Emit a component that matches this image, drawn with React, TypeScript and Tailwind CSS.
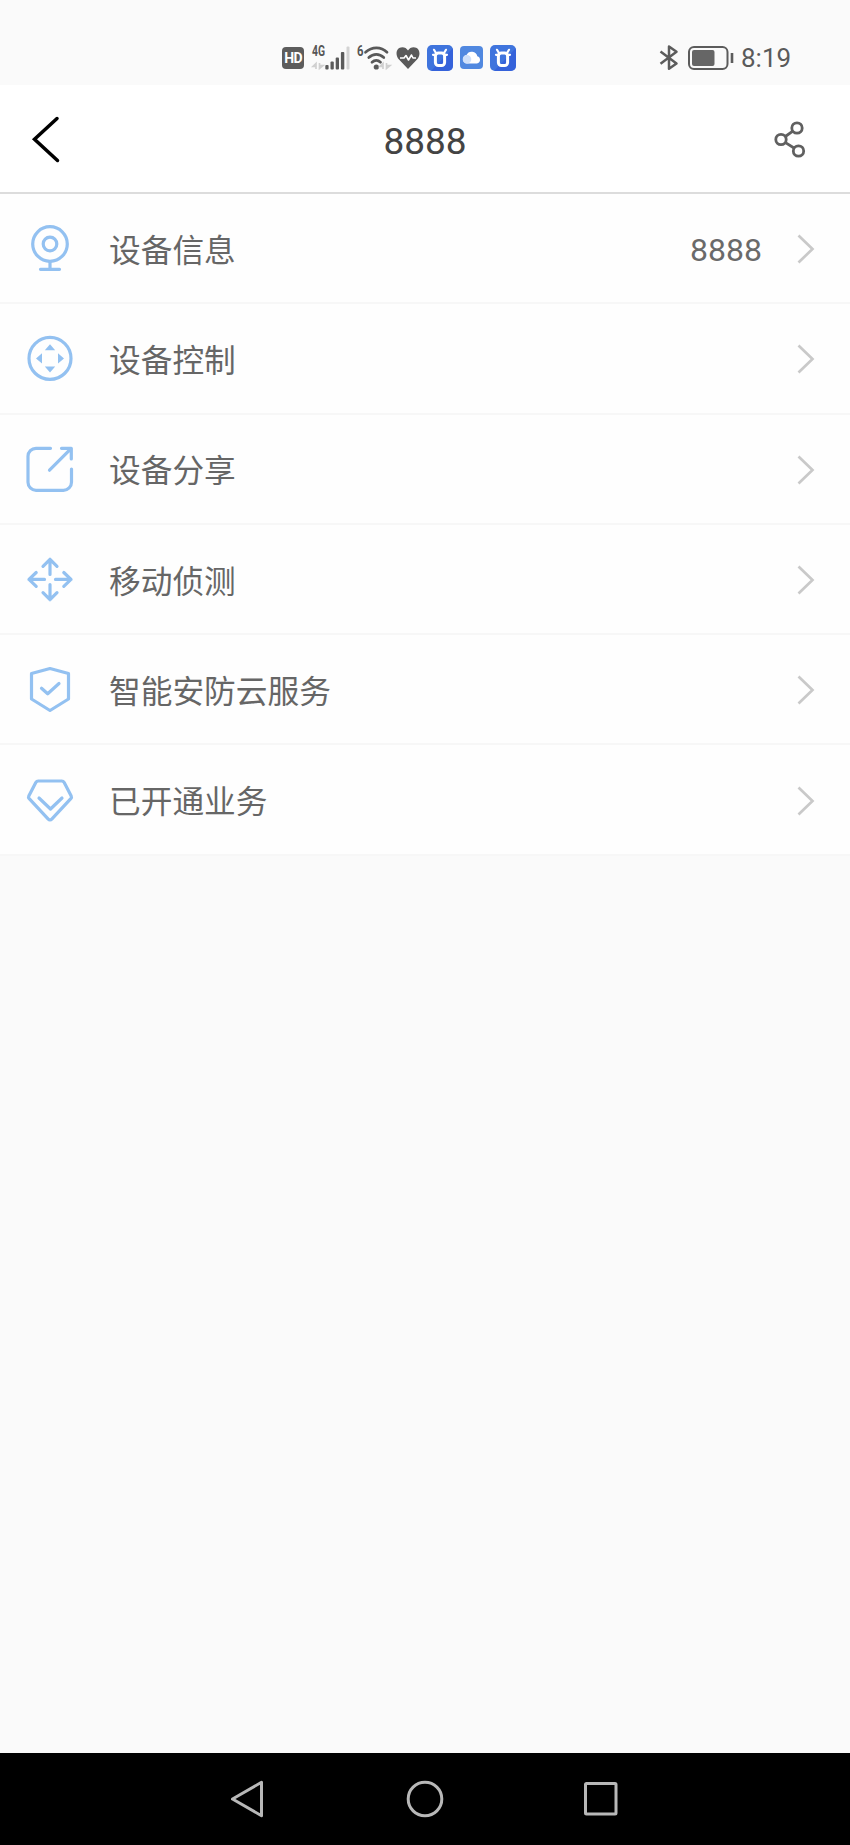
import type { ReactNode } from 'react';

type MenuItem = {
  label: string;
  value?: string;
  icon: ReactNode;
};

const menuItems: MenuItem[] = [
  {
    label: '设备信息',
    value: '8888',
    icon: (
      <>
        <circle cx="25" cy="20" r="17.3" />
        <circle cx="25" cy="20" r="6.8" />
        <path d="M25 37.5v7.5M15.5 45.3h19" />
      </>
    ),
  },
  {
    label: '设备控制',
    icon: (
      <>
        <circle cx="25" cy="24.4" r="21" />
        <path
          d="M25 10.3l5.2 6H19.8zM25 38.5l5.2-6H19.8zM11 24.4l6-5.2v10.4zM39 24.4l-6-5.2v10.4z"
          fill="currentColor"
          stroke="none"
        />
      </>
    ),
  },
  {
    label: '设备分享',
    icon: (
      <>
        <path d="M25.5 3.3H11a8 8 0 0 0-8 8v26a8 8 0 0 0 8 8h27.5a8 8 0 0 0 8-8V24" />
        <path d="M36.5 3.3h9.8V14M46 3.6L24.5 25.2" />
      </>
    ),
  },
  {
    label: '移动侦测',
    icon: (
      <>
        <path d="M25 19.5V4.5M18 11.3l7-7 7 7" />
        <path d="M25 29.5v15M18 37.7l7 7 7-7" />
        <path d="M19.5 24.4H4M11.2 17.5L4 24.4l7.2 6.9" />
        <path d="M30.5 24.4H46M38.8 17.5l7.2 6.9-7.2 6.9" />
      </>
    ),
  },
  {
    label: '智能安防云服务',
    icon: (
      <>
        <path d="M25 3.5l18.5 5V34L25 45.5 6.5 34V8.5z" />
        <path d="M16.5 23.3l6.2 5.5L34 18.5" />
      </>
    ),
  },
  {
    label: '已开通业务',
    icon: (
      <>
        <path d="M13.3 5h23.4c1.3 0 2 .6 2.5 1.5l7 13.5c.5 1 .3 1.8-.4 2.6L27 42.8c-1.3 1.4-2.7 1.4-4 0L4.2 22.6c-.7-.8-.9-1.6-.4-2.6l7-13.5C11.3 5.6 12 5 13.3 5z" />
        <path d="M14 22l11.5 11L37 22" />
      </>
    ),
  },
];

function DataArrows({ x }: { x: number }) {
  return (
    <path
      transform={`translate(${x} 17)`}
      d="M3.5 7V1.5L.5 4.5h3M7 1v5.5l3.5-3H7"
      fill="none"
      stroke="#d0d0d0"
      strokeWidth="1.7"
    />
  );
}

function SignalIcon() {
  return (
    <svg className="ml-2 h-[26px] w-[38px] overflow-visible" viewBox="0 0 38 26">
      <text x="0" y="10.8" fontSize="14" fontWeight="700" fill="#555" textLength="13" lengthAdjust="spacingAndGlyphs">
        4G
      </text>
      <DataArrows x={0.5} />
      <g fill="#5a5a5a">
        <rect x="13.3" y="20" width="3.3" height="4.5" rx="1" />
        <rect x="18.5" y="16.5" width="3.3" height="8" rx="1" />
        <rect x="23.7" y="12.5" width="3.3" height="12" rx="1" />
        <rect x="28.9" y="7" width="3.4" height="17.5" rx="1" />
      </g>
      <rect x="34.5" y="1.5" width="3" height="23" rx="1" fill="#d3d3d3" />
    </svg>
  );
}

function WifiIcon() {
  return (
    <svg className="ml-[7px] h-[26px] w-[33px] overflow-visible" viewBox="0 0 33 26">
      <text x="0" y="11" fontSize="14" fontWeight="700" fill="#555" textLength="6.5" lengthAdjust="spacingAndGlyphs">
        6
      </text>
      <g fill="none" stroke="#595959" strokeWidth="2.7" strokeLinecap="round">
        <path d="M8.5 7.3c6.5-6 15.5-6 21.5 0" />
        <path d="M11.8 12.5c4.5-4.3 10.5-4.3 15 0" />
        <path d="M15 17.3c2.6-2.5 6-2.5 8.5 0" />
      </g>
      <circle cx="19.3" cy="22" r="2.6" fill="#595959" />
      <DataArrows x={22.5} />
    </svg>
  );
}

function BullIcon() {
  return (
    <svg className="ml-[7px] h-[26px] w-[26px]" viewBox="0 0 26 26">
      <rect width="26" height="26" rx="5" fill="#3f74dd" />
      <path d="M4 26L26 3v18a5 5 0 0 1-5 5z" fill="#2f56d8" opacity=".6" />
      <rect x="8.4" y="8" width="9.2" height="12.6" rx="3" fill="none" stroke="#fff" strokeWidth="3" />
      <path d="M7 4.8l1.8 3M19 4.8l-1.8 3M6 9.8h2M18 9.8h2" stroke="#fff" strokeWidth="2.2" strokeLinecap="round" />
    </svg>
  );
}

function StatusBar() {
  return (
    <div className="flex h-[85px] items-start pt-[45px] pl-[282px]">
      <span className="mt-[2px] flex h-[22px] w-[22px] items-center justify-center rounded-[4px] bg-[#5c5c5c] text-[14px] leading-none font-bold tracking-tighter text-white">
        HD
      </span>
      <SignalIcon />
      <WifiIcon />
      <svg className="ml-[6px] h-[26px] w-6" viewBox="0 0 24 26">
        <path
          d="M12 24L3 14.5C-1.5 9.5.5 2.2 6.3 2.2c2.5 0 4.5 1.2 5.7 3.3 1.2-2.1 3.2-3.3 5.7-3.3C23.5 2.2 25.5 9.5 21 14.5z"
          fill="#5a5a5a"
        />
        <path d="M4 13h4l2-2.5 2.5 4.5 3-5 1.5 3h3" fill="none" stroke="#fff" strokeWidth="1.6" strokeLinejoin="round" />
      </svg>
      <BullIcon />
      <svg className="ml-[7px] h-[26px] w-[23px]" viewBox="0 0 23 26">
        <rect y="1" width="23" height="23" rx="4" fill="#5088e0" />
        <path d="M7 18.5a4.3 4.3 0 0 1-.5-8.5 5.7 5.7 0 0 1 10.8 1.3 3.7 3.7 0 0 1-.3 7.2z" fill="#fff" />
        <path d="M7 18.5a4.3 4.3 0 1 1 4.3-4.3c0 2.3-1.8 4.3-4.3 4.3z" fill="#cfe0fa" />
      </svg>
      <BullIcon />
      <svg className="ml-[143px] h-[26px] w-5" viewBox="0 0 20 26" fill="none" stroke="#5c5c5c" strokeWidth="2.5" strokeLinejoin="round">
        <path d="M1.5 6.5l16 12-7.5 5.2V1.5l7.5 5.2-16 12" />
      </svg>
      <svg className="ml-2 h-[26px] w-[48px]" viewBox="0 0 48 26">
        <rect x="2" y="2" width="38.5" height="22" rx="5" fill="none" stroke="#5c5c5c" strokeWidth="2" />
        <rect x="5" y="5" width="22.5" height="16" rx="2" fill="#666" />
        <path d="M45 8v10" stroke="#5c5c5c" strokeWidth="2.6" />
      </svg>
      <span className="ml-[6px] text-[26px] leading-[27px] text-[#5a5a5a]">8:19</span>
    </div>
  );
}

function Header() {
  return (
    <header className="flex h-[109px] items-center justify-between border-b-2 border-[#dcdcdc] bg-white pr-[38px] pb-px pl-[26px]">
      <svg className="mr-3 h-[50px] w-10" viewBox="0 0 40 50" fill="none" stroke="#000" strokeWidth="3.5" strokeLinecap="round">
        <path d="M31 5.5L8.5 26.3l23 21.2" />
      </svg>
      <h1 className="pt-[7px] text-[37px] leading-none text-[#444]">8888</h1>
      <svg className="h-10 w-10" viewBox="0 0 40 40" fill="none" stroke="#606060" strokeWidth="2.8">
        <circle cx="25" cy="10" r="5.2" />
        <circle cx="9" cy="21.5" r="5.2" />
        <circle cx="26.5" cy="33" r="5.2" />
        <path d="M13.3 18.5l7.5-5.4M13.5 24.6l8.5 5.4" />
      </svg>
    </header>
  );
}

function MenuRow({ label, value, icon }: MenuItem) {
  return (
    <li className="flex h-[110.3px] items-center border-b-2 border-[#f7f7f7] bg-[#fefefe] pt-[2px] pr-[32px] pl-[25px]">
      <svg
        className="h-[50px] w-[50px] text-[#93c1f1]"
        viewBox="0 0 50 50"
        fill="none"
        stroke="currentColor"
        strokeWidth="3.2"
        strokeLinecap="round"
        strokeLinejoin="round"
      >
        {icon}
      </svg>
      <span className="ml-[34px] pt-[5px] text-[31.7px] leading-none text-[#666]">{label}</span>
      {value && <span className="ml-auto pt-[2px] text-[32px] leading-none text-[#6a6a6a]">{value}</span>}
      <svg
        className={value ? 'ml-[32px] h-8 w-6' : 'ml-auto h-8 w-6'}
        viewBox="0 0 24 32"
        fill="none"
        stroke="#c9c9c9"
        strokeWidth="2.7"
      >
        <path d="M4.5 2.5l14 13.5-14 13.5" />
      </svg>
    </li>
  );
}

function NavBar() {
  return (
    <nav className="flex h-[92px] items-center bg-black pl-[227px]">
      <svg className="h-10 w-10" viewBox="0 0 40 40" fill="none" stroke="#b8b8b8" strokeWidth="3" strokeLinejoin="round">
        <path d="M5.5 20L34.5 3.3v33.4z" />
      </svg>
      <svg className="ml-[138px] h-10 w-10" viewBox="0 0 40 40" fill="none" stroke="#b8b8b8" strokeWidth="3">
        <circle cx="20" cy="20" r="16.8" />
      </svg>
      <svg className="ml-[136px] h-10 w-10" viewBox="0 0 40 40" fill="none" stroke="#b8b8b8" strokeWidth="3">
        <rect x="4.5" y="4.5" width="30.5" height="30.5" rx="1" />
      </svg>
    </nav>
  );
}

export default function App() {
  return (
    <div className="flex h-[1845px] w-[850px] flex-col overflow-hidden bg-[#fafafa] font-[Roboto,'Noto_Sans_CJK_SC',sans-serif]">
      <StatusBar />
      <Header />
      <main className="flex-1">
        <ul>
          {menuItems.map((item) => (
            <MenuRow key={item.label} {...item} />
          ))}
        </ul>
      </main>
      <NavBar />
    </div>
  );
}
